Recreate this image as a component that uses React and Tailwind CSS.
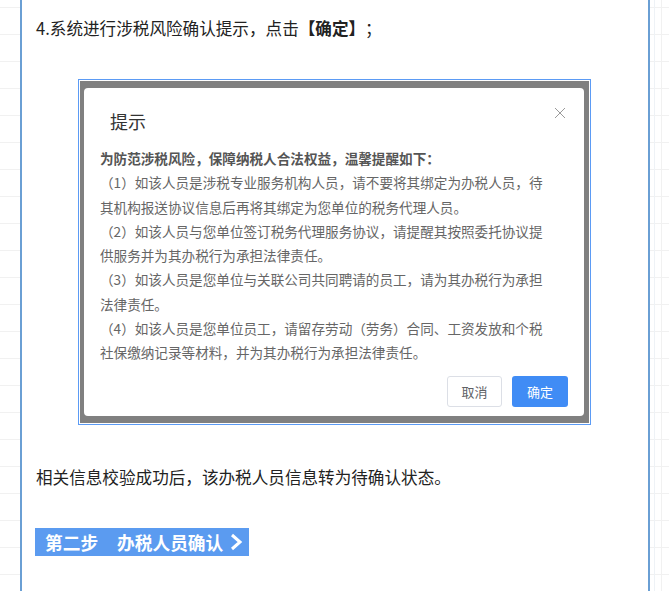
import React from 'react'

const font = { fontFamily: '"Noto Sans CJK SC", "Noto Sans", sans-serif' }

function TipDialog() {
  return (
    <div className="relative w-[500px] rounded-[4px] bg-white pt-[21px] pb-[9px]">
      <h3 className="pl-[26px] text-[18px] leading-[24px] text-[#333]">提示</h3>
      <button className="absolute right-[18px] top-[19px] h-[12px] w-[12px]" aria-label="关闭">
        <svg viewBox="0 0 12 12" className="h-[12px] w-[12px]">
          <path d="M1 1L11 11M11 1L1 11" stroke="#9a9a9a" strokeWidth="1" fill="none" />
        </svg>
      </button>

      <div className="mt-[13px] pl-[16px] pr-[34px] text-[13.6px] leading-[24.25px] text-[#666]">
        <p className="font-bold text-[#555]">为防范涉税风险，保障纳税人合法权益，温馨提醒如下：</p>
        <p>（1）如该人员是涉税专业服务机构人员，请不要将其绑定为办税人员，待其机构报送协议信息后再将其绑定为您单位的税务代理人员。</p>
        <p>（2）如该人员与您单位签订税务代理服务协议，请提醒其按照委托协议提供服务并为其办税行为承担法律责任。</p>
        <p>（3）如该人员是您单位与关联公司共同聘请的员工，请为其办税行为承担法律责任。</p>
        <p>（4）如该人员是您单位员工，请留存劳动（劳务）合同、工资发放和个税社保缴纳记录等材料，并为其办税行为承担法律责任。</p>
      </div>

      <div className="mt-[12px] flex justify-end gap-[10px] pr-[16px]">
        <button className="h-[31px] w-[55px] rounded-[3px] border border-[#dcdfe6] bg-white text-[13px] text-[#606266]">
          取消
        </button>
        <button className="h-[31px] w-[56px] rounded-[3px] bg-[#408cf5] text-[13px] text-white">
          确定
        </button>
      </div>
    </div>
  )
}

export default function App() {
  return (
    <div
      className="flex h-[591px] w-[669px] overflow-hidden bg-white bg-[linear-gradient(to_bottom,#f1f1f1_1px,transparent_1px)] bg-[size:100%_27px] bg-[position:0_7px] [text-spacing-trim:space-all]"
      style={font}
    >
      <div className="w-[20px] shrink-0" />

      <div className="w-[630px] shrink-0 border-x-2 border-[#6a9fd4] bg-white pl-[14px]">
        <p className="pt-[14px] text-[16.6px] leading-[28px] text-[#222]">
          4.系统进行涉税风险确认提示，点击<span className="font-bold">【确定】</span>；
        </p>

        <div className="ml-[42px] mt-[37px] w-[513px] border border-[#5b9bf5] bg-white p-px">
          <div className="bg-[#808080] pb-[7px] pl-[4px] pr-[5px] pt-[7px]">
            <TipDialog />
          </div>
        </div>

        <p className="mt-[38px] text-[16.6px] leading-[28px] text-[#222]">
          相关信息校验成功后，该办税人员信息转为待确认状态。
        </p>

        <div className="-ml-px mt-[37px] flex h-[28px] w-[214px] items-center bg-[#5b9bf0] pl-[10px] text-[17.7px] font-bold text-white">
          <span>第二步</span>
          <span className="ml-[19px]">办税人员确认</span>
          <svg viewBox="0 0 14 18" className="ml-[6px] h-[18px] w-[14px]">
            <polyline points="3,2 11,9 3,16" stroke="white" strokeWidth="3" fill="none" />
          </svg>
        </div>
      </div>

      <div className="flex-1 bg-[linear-gradient(to_right,transparent_4px,#eef2f6_4px,#eef2f6_5px,transparent_5px,transparent_11px,#f1f1f1_11px,#f1f1f1_12px,transparent_12px)]" />
    </div>
  )
}
